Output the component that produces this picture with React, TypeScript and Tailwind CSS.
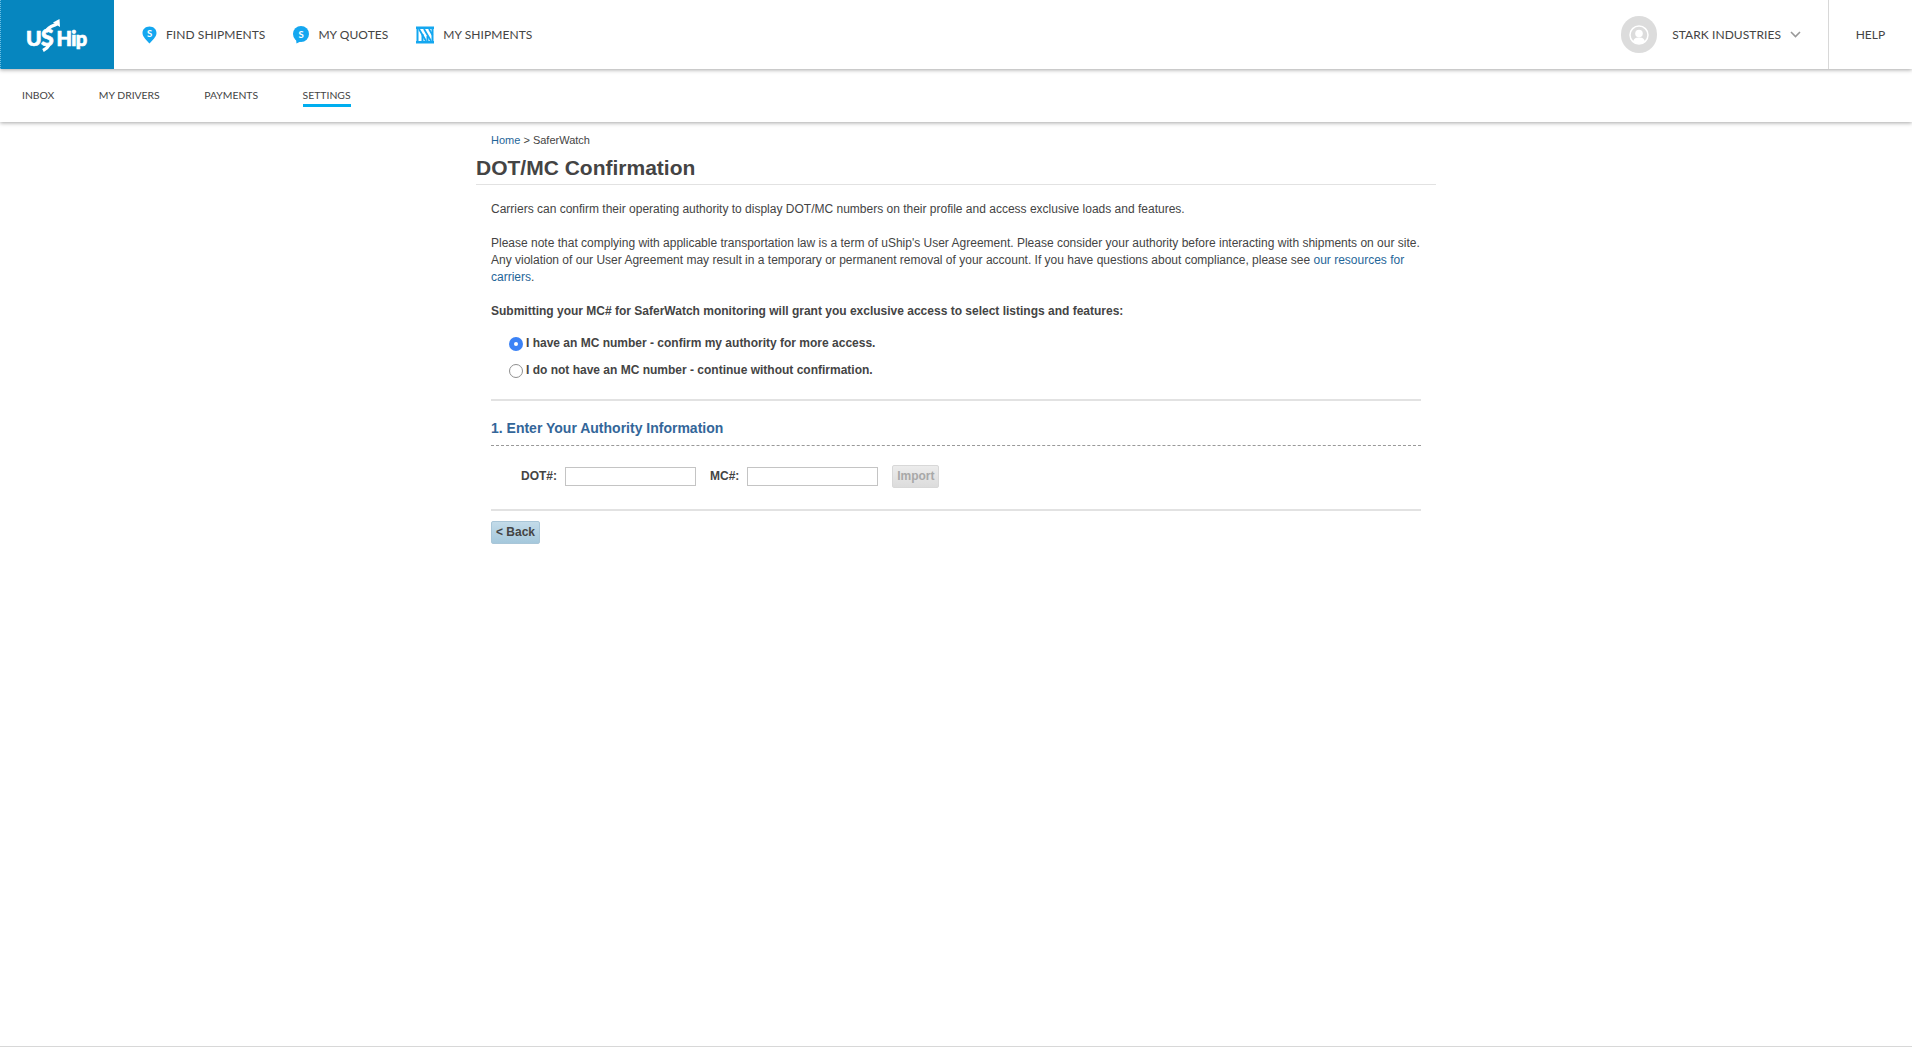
import React from "react";

const lato = "font-['Lato','Liberation_Sans',sans-serif]";

function Logo() {
  return (
    <svg width="62" height="33" viewBox="0 0 62 33" className="shrink-0" fontFamily="Lato" fontWeight="900" fill="#fff" stroke="#fff" strokeWidth="0.7">
      <text x="0" y="26.500" fontSize="21">U</text>
      <text x="15" y="27" fontSize="23">S</text>
      <text x="30.500" y="26.500" fontSize="20" letterSpacing="-0.700">Hip</text>
      <path d="M23 26c-1 2-3 4-6 5.500" strokeWidth="3.400" fill="none" />
      <path d="M20 13c2-5 6-6 9-7 1-.5 2-1 2.500-2" strokeWidth="3.400" fill="none" />
      <path d="M27 3.500L33.500 0l.5 8z" strokeWidth="0" />
    </svg>
  );
}

function Pin() {
  return (
    <svg width="15" height="18" viewBox="0 0 15 18" className="shrink-0">
      <path d="M7.500 0.500C3.400 0.500 0.500 3.400 0.500 7c0 4 4.600 7.600 7 10.500C9.900 14.600 14.500 11 14.500 7c0-3.600-2.900-6.500-7-6.500z" fill="#14a7f0" />
      <text x="7.500" y="10.500" textAnchor="middle" fontSize="9.500" fontWeight="700" fill="#fff" fontFamily="Lato">S</text>
    </svg>
  );
}

function Bubble() {
  return (
    <svg width="16" height="18" viewBox="0 0 16 18" className="shrink-0">
      <circle cx="8" cy="8" r="8" fill="#14a7f0" />
      <path d="M3 13l.5 4.500 5-2.500z" fill="#14a7f0" />
      <text x="8" y="11.500" textAnchor="middle" fontSize="9.500" fontWeight="700" fill="#fff" fontFamily="Lato">S</text>
    </svg>
  );
}

function Crate() {
  return (
    <svg width="18" height="18" viewBox="0 0 18 18" className="shrink-0">
      <rect x="0" y="0.500" width="18" height="2.500" fill="#14a7f0" />
      <rect x="0" y="15" width="18" height="2.500" fill="#14a7f0" />
      <path d="M1.500 3v12M16.500 3v12M6.500 8v7M11.500 10v5" stroke="#14a7f0" strokeWidth="2" fill="none" />
      <path d="M3 3l7 12M8 3l7 12M13 3l3.500 6" stroke="#14a7f0" strokeWidth="1.800" fill="none" />
    </svg>
  );
}

function NavItem({ icon, label, gap }: { icon: React.ReactNode; label: string; gap: string }) {
  return (
    <div className={`flex items-center ${gap}`}>
      {icon}
      <span className="text-[12px] text-[#444] tracking-[0.06px]">{label}</span>
    </div>
  );
}

function SubItem({ label, active }: { label: string; active?: boolean }) {
  return (
    <span className={`mt-[3px] text-[10.400px] leading-[16px] text-[#444] pb-[1px] border-b-[3px] ${active ? "border-[#00aeef]" : "border-transparent"}`}>
      {label}
    </span>
  );
}

export default function App() {
  return (
    <div className="min-h-[1048px] bg-white flex flex-col relative font-['Liberation_Sans',Arial,sans-serif]">
      <header className={`${lato} h-[69px] flex items-stretch bg-white relative z-20 shadow-[0_1px_4px_rgba(0,0,0,0.35)]`}>
        <div className="w-[114px] bg-[#0686bf] border-l border-dotted border-[#6cbde2] flex items-center justify-center">
          <div className="ml-[-2px] mt-[1px]">
            <Logo />
          </div>
        </div>
        <nav className="flex items-center gap-[28px] pl-[28px]">
          <NavItem icon={<Pin />} label="FIND SHIPMENTS" gap="gap-[9px]" />
          <NavItem icon={<Bubble />} label="MY QUOTES" gap="gap-[9px]" />
          <NavItem icon={<Crate />} label="MY SHIPMENTS" gap="gap-[9px]" />
        </nav>
        <div className="ml-auto flex items-stretch">
          <div className="flex items-center pr-[27px]">
            <div className="w-[36px] h-[37px] rounded-full bg-[#dcdcdc] flex items-center justify-center">
              <svg width="20" height="20" viewBox="0 0 20 20">
                <circle cx="10" cy="10" r="9" fill="none" stroke="#fff" strokeWidth="1.500" />
                <circle cx="10" cy="8.500" r="3.800" fill="#fff" />
                <path d="M4 16.500c1-3.500 3.200-4 6-4s5 .5 6 4a9 9 0 0 1-12 0z" fill="#fff" />
              </svg>
            </div>
            <span className="ml-[15px] text-[12px] text-[#444] tracking-[0.06px]">STARK INDUSTRIES</span>
            <svg width="11" height="7" viewBox="0 0 11 7" className="ml-[9px]">
              <path d="M1 1l4.500 4.500L10 1" fill="none" stroke="#999" strokeWidth="1.600" />
            </svg>
          </div>
          <div className="w-[84px] border-l border-[#d8d8d8] flex items-center justify-center">
            <span className="text-[12px] text-[#444] tracking-[0.06px]">HELP</span>
          </div>
        </div>
      </header>

      <div className={`${lato} h-[53px] flex items-center gap-[44.500px] pl-[22px] bg-white relative z-10 shadow-[0_1px_4px_rgba(0,0,0,0.35)]`}>
        <SubItem label="INBOX" />
        <SubItem label="MY DRIVERS" />
        <SubItem label="PAYMENTS" />
        <SubItem label="SETTINGS" active />
      </div>

      <main className="w-[960px] mx-auto text-[12px] leading-[17px] text-[#444] grow">
        <div className="pl-[15px] pt-[10px] text-[11px] leading-[16px]">
          <span className="text-[#1f6699]">Home</span> &gt; SaferWatch
        </div>
        <h1 className="text-[21px] leading-[26px] font-bold text-[#444] mt-[7px] pb-[3px] border-b border-[#e2e2e2]">DOT/MC Confirmation</h1>
        <div className="px-[15px]">
          <p className="mt-[16px]">Carriers can confirm their operating authority to display DOT/MC numbers on their profile and access exclusive loads and features.</p>
          <p className="mt-[17px]">
            Please note that complying with applicable transportation law is a term of uShip's User Agreement. Please consider your authority before interacting with shipments on our site. Any violation of our User Agreement may result in a temporary or permanent removal of your account. If you have questions about compliance, please see{" "}
            <span className="text-[#1f6699]">our resources for</span>{" "}
            <span className="text-[#1f6699]">carriers</span>.
          </p>
          <p className="mt-[17px] font-bold">Submitting your MC# for SaferWatch monitoring will grant you exclusive access to select listings and features:</p>

          <div className="mt-[15px] pl-[18px] font-bold">
            <div className="flex items-start h-[27px]">
              <span className="w-[14px] h-[14px] mt-[2px] rounded-full bg-[#3b82f6] flex items-center justify-center shrink-0">
                <span className="w-[4px] h-[4px] rounded-full bg-white" />
              </span>
              <span className="ml-[3px]">I have an MC number - confirm my authority for more access.</span>
            </div>
            <div className="flex items-start h-[27px]">
              <span className="w-[14px] h-[14px] mt-[2px] rounded-full bg-white border border-[#8f8f8f] shrink-0" />
              <span className="ml-[3px]">I do not have an MC number - continue without confirmation.</span>
            </div>
          </div>

          <div className="mt-[10px] border-t-2 border-[#e2e2e2]" />
          <h2 className="mt-[19px] text-[14px] leading-[17px] font-bold text-[#336699]">1. Enter Your Authority Information</h2>
          <div className="mt-[8px] border-t border-dashed border-[#999]" />
          <div className="flex items-center mt-[19px] pl-[30px] font-bold">
            <span>DOT#:</span>
            <input className="ml-[8px] w-[131px] h-[19px] border border-[#c4c4c4] bg-white" />
            <span className="ml-[14px]">MC#:</span>
            <input className="ml-[8px] w-[131px] h-[19px] border border-[#c4c4c4] bg-white" />
            <button className="ml-[14px] w-[47px] h-[23px] rounded-[2px] border border-[#d8d8d8] bg-gradient-to-b from-[#ececec] to-[#dcdcdc] text-[#a8a8a8] font-bold">Import</button>
          </div>
          <div className="mt-[21px] border-t-2 border-[#e2e2e2]" />
          <button className="mt-[10px] w-[49px] h-[23px] rounded-[2px] border border-[#a9c6d8] bg-gradient-to-b from-[#c3dbe9] to-[#a5c8dc] text-[#444] font-bold">&lt; Back</button>
        </div>
      </main>
      <div className="h-[1px] mb-[1px] bg-[#d8d8d8]" />
    </div>
  );
}
